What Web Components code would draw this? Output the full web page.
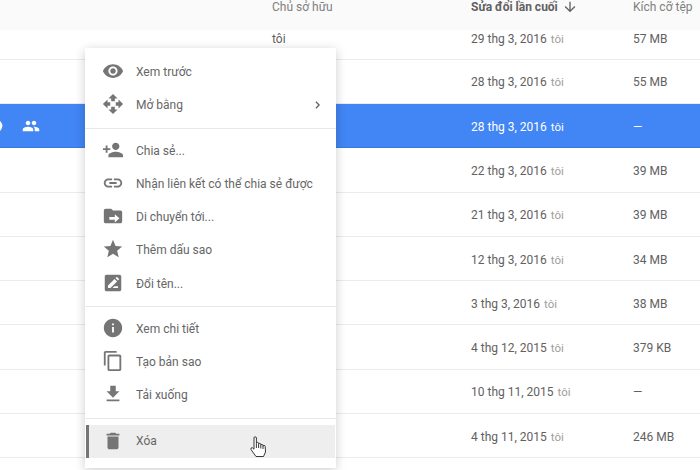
<!DOCTYPE html>
<html lang="vi">
<head>
<meta charset="utf-8">
<title>Drive</title>
<style>
  html, body { margin: 0; height: 100%; overflow: hidden; background: #fff; }
  body { position: relative; font-family: Roboto, "Noto Sans", sans-serif; }
</style>
</head>
<body>

<drive-list>
  <drive-row first owner="tôi" date="29 thg 3, 2016" by="tôi" size="57 MB"></drive-row>
  <drive-row date="28 thg 3, 2016" by="tôi" size="55 MB"></drive-row>
  <drive-row selected date="28 thg 3, 2016" by="tôi" size="—">
    <svg viewBox="0 0 24 24" width="18" height="18" fill="#fff" style="margin-left:-13px;flex:none"><circle cx="12" cy="12" r="7" fill="none" stroke="#fff" stroke-width="3"/></svg>
    <svg viewBox="0 0 24 24" width="18" height="18" fill="#fff" style="margin-left:17px;flex:none"><path d="M16 11c1.66 0 2.99-1.34 2.99-3S17.66 5 16 5c-1.66 0-3 1.34-3 3s1.34 3 3 3zm-8 0c1.66 0 2.99-1.34 2.99-3S9.66 5 8 5C6.34 5 5 6.34 5 8s1.34 3 3 3zm0 2c-2.33 0-7 1.17-7 3.5V19h14v-2.5c0-2.33-4.67-3.5-7-3.5zm8 0c-.29 0-.62.02-.97.05 1.16.84 1.97 1.97 1.97 3.45V19h6v-2.5c0-2.33-4.67-3.5-7-3.5z"/></svg>
  </drive-row>
  <drive-row date="22 thg 3, 2016" by="tôi" size="39 MB"></drive-row>
  <drive-row date="21 thg 3, 2016" by="tôi" size="39 MB"></drive-row>
  <drive-row date="12 thg 3, 2016" by="tôi" size="34 MB"></drive-row>
  <drive-row date="3 thg 3, 2016" by="tôi" size="38 MB"></drive-row>
  <drive-row date="4 thg 12, 2015" by="tôi" size="379 KB"></drive-row>
  <drive-row date="10 thg 11, 2015" by="tôi" size="—"></drive-row>
  <drive-row date="4 thg 11, 2015" by="tôi" size="246 MB"></drive-row>
</drive-list>

<context-menu>
  <menu-group>
    <menu-item icon="M12 4.5C7 4.5 2.73 7.61 1 12c1.73 4.39 6 7.5 11 7.5s9.27-3.11 11-7.5c-1.73-4.39-6-7.5-11-7.5zM12 17c-2.76 0-5-2.24-5-5s2.24-5 5-5 5 2.24 5 5-2.24 5-5 5zm0-8c-1.66 0-3 1.34-3 3s1.34 3 3 3 3-1.34 3-3-1.34-3-3-3z">Xem trước</menu-item>
    <menu-item submenu icon="M10 9h4V6h3l-5-5-5 5h3v3zm-1 1H6V7l-5 5 5 5v-3h3v-4zm14 2l-5-5v3h-3v4h3v3l5-5zm-9 3h-4v3H7l5 5 5-5h-3v-3z">Mở bằng</menu-item>
  </menu-group>
  <menu-group>
    <menu-item icon="M15 12c2.21 0 4-1.79 4-4s-1.79-4-4-4-4 1.79-4 4 1.79 4 4 4zm-9-2V7H4v3H1v2h3v3h2v-3h3v-2H6zm9 4c-2.67 0-8 1.34-8 4v2h16v-2c0-2.66-5.33-4-8-4z">Chia sẻ...</menu-item>
    <menu-item icon="M3.9 12c0-1.71 1.39-3.1 3.1-3.1h4V7H7c-2.76 0-5 2.24-5 5s2.24 5 5 5h4v-1.9H7c-1.71 0-3.1-1.39-3.1-3.1zM8 13h8v-2H8v2zm9-6h-4v1.9h4c1.71 0 3.1 1.39 3.1 3.1s-1.39 3.1-3.1 3.1h-4V17h4c2.76 0 5-2.24 5-5s-2.24-5-5-5z">Nhận liên kết có thể chia sẻ được</menu-item>
    <menu-item icon="M20 6h-8l-2-2H4c-1.1 0-1.99.9-1.99 2L2 18c0 1.1.9 2 2 2h16c1.1 0 2-.9 2-2V8c0-1.1-.9-2-2-2zm-6 13v-3H8v-3h6v-3l5 4.5z">Di chuyển tới...</menu-item>
    <menu-item icon="M12 17.27L18.18 21l-1.64-7.03L22 9.24l-7.19-.61L12 2 9.19 8.63 2 9.24l5.46 4.73L5.82 21z">Thêm dấu sao</menu-item>
    <menu-item icon="M19 3H5c-1.1 0-2 .9-2 2v14c0 1.1.9 2 2 2h14c1.1 0 2-.9 2-2V5c0-1.1-.9-2-2-2zM6.5 17.5v-2.7l7.2-7.2 2.7 2.7-7.2 7.2zm11 0h-6l2-2h4zm-.1-8.2-2.7-2.7 1-1c.3-.3.7-.3 1 0l1.7 1.7c.3.3.3.7 0 1z">Đổi tên...</menu-item>
  </menu-group>
  <menu-group>
    <menu-item icon="M12 2C6.48 2 2 6.48 2 12s4.48 10 10 10 10-4.48 10-10S17.52 2 12 2zm1 15h-2v-6h2v6zm0-8h-2V7h2v2z">Xem chi tiết</menu-item>
    <menu-item icon="M16 1H4c-1.1 0-2 .9-2 2v14h2V3h12V1zm3 4H8c-1.1 0-2 .9-2 2v14c0 1.1.9 2 2 2h11c1.1 0 2-.9 2-2V7c0-1.1-.9-2-2-2zm0 16H8V7h11v14z">Tạo bản sao</menu-item>
    <menu-item icon="M19 9h-4V3H9v6H5l7 7 7-7zM5 18v2h14v-2H5z">Tải xuống</menu-item>
  </menu-group>
  <menu-group last>
    <menu-item active icon="M6 19c0 1.1.9 2 2 2h8c1.1 0 2-.9 2-2V7H6v12zM19 4h-3.5l-1-1h-5l-1 1H5v2h14V4z">Xóa</menu-item>
  </menu-group>
</context-menu>

<script>
class DriveList extends HTMLElement {

    static get template() {

        return `
            <style>
                :host { display: block; }
                header {
                    display: grid;
                    grid-template-columns: 272px 199px 162px 1fr;
                    height: 30px;
                    box-sizing: border-box;
                    padding-top: 1px;
                    background: #fafafa;
                    font: 12px/12px Roboto, sans-serif;
                    color: #808080;
                }
                header > span { white-space: nowrap; }
                .sorted {
                    display: flex;
                    align-items: flex-start;
                    gap: 4px;
                    font-weight: 700;
                    color: #616161;
                }
                .sorted svg { margin-top: -2px; }
            </style>
            <header>
                <span></span>
                <span>Chủ sở hữu</span>
                <span class="sorted">Sửa đổi lần cuối
                    <svg viewBox="0 0 24 24" width="16" height="16" fill="#616161"><path d="M20 12l-1.41-1.41L13 16.17V4h-2v12.17l-5.58-5.59L4 12l8 8z"/></svg>
                </span>
                <span>Kích cỡ tệp</span>
            </header>
            <slot></slot>
        `;
    }

    constructor() {

        super();

        this.theRoot = this.attachShadow({mode: 'open'});
        this.theRoot.innerHTML = DriveList.template;
    }
}

class DriveRow extends HTMLElement {

    static get template() {

        return `
            <style>
                :host {
                    display: grid;
                    grid-template-columns: 272px 199px 162px 1fr;
                    align-items: center;
                    height: 44.3px;
                    padding-top: 2px;
                    box-sizing: border-box;
                    border-bottom: 1px solid #ebebeb;
                    font: 12px/16px Roboto, sans-serif;
                    color: #616161;
                }
                :host([first]) {
                    height: 29.7px;
                    padding-top: 1px;
                    align-items: start;
                }
                :host([selected]) {
                    background: #4285f4;
                    color: #fff;
                    border-bottom-color: #3b78e0;
                }
                .name { display: flex; align-items: center; overflow: hidden; margin-top: -2px; }
                .date { display: flex; gap: 4px; white-space: nowrap; }
                .by { color: #9e9e9e; font-size: 11.5px; }
                :host([selected]) .by { color: #fff; }
            </style>
            <div class="name"><slot></slot></div>
            <div class="owner"></div>
            <div class="date"><span class="when"></span><span class="by"></span></div>
            <div class="size"></div>
        `;
    }

    constructor() {

        super();

        this.theRoot = this.attachShadow({mode: 'open'});
        this.theRoot.innerHTML = DriveRow.template;
    }

    connectedCallback() {

        this.theRoot.querySelector('.owner').textContent = this.getAttribute('owner') || '';
        this.theRoot.querySelector('.when').textContent = this.getAttribute('date');
        this.theRoot.querySelector('.by').textContent = this.getAttribute('by');
        this.theRoot.querySelector('.size').textContent = this.getAttribute('size');
    }
}

class ContextMenu extends HTMLElement {

    static get template() {

        return `
            <style>
                :host {
                    display: block;
                    position: absolute;
                    left: 85px;
                    top: 48px;
                    width: 251px;
                    height: 420px;
                    box-sizing: border-box;
                    padding-top: 6.5px;
                    background: #fff;
                    box-shadow: 0 2px 10px rgba(0, 0, 0, .2);
                }
            </style>
            <slot></slot>
        `;
    }

    constructor() {

        super();

        this.attachShadow({mode: 'open'}).innerHTML = ContextMenu.template;
    }
}

class MenuGroup extends HTMLElement {

    static get template() {

        return `
            <style>
                :host {
                    display: block;
                    padding-bottom: 6.5px;
                    margin-bottom: 4.3px;
                    border-bottom: 1px solid #e8e8e8;
                }
                :host([last]) {
                    border-bottom: 0;
                    padding: 2px 0 0;
                    margin: 0;
                }
            </style>
            <slot></slot>
        `;
    }

    constructor() {

        super();

        this.attachShadow({mode: 'open'}).innerHTML = MenuGroup.template;
    }
}

class MenuItem extends HTMLElement {

    static get template() {

        return `
            <style>
                :host {
                    display: flex;
                    align-items: center;
                    position: relative;
                    height: 33.3px;
                    padding-left: 17px;
                    font: 12px/16px Roboto, sans-serif;
                    color: #666;
                    white-space: nowrap;
                }
                :host([active]) {
                    margin-left: 1px;
                    margin-right: 1px;
                    padding-left: 13px;
                    border-left: 3px solid #757575;
                    background: #eee;
                }
                .icon { width: 22px; height: 22px; margin-right: 12px; fill: #757575; flex: none; }
                .label { padding-top: 2px; }
                :host([active]) .label { padding: 0 0 2px; }
                :host([active]) .icon { margin-bottom: 2px; }
                .arrow { display: none; position: absolute; right: 16px; top: 13px; }
                :host([submenu]) .arrow { display: block; }
                .cursor { display: none; position: absolute; left: 161px; top: 11px; }
                :host([active]) .cursor { display: block; }
            </style>
            <svg class="icon" viewBox="0 0 24 24"><path></path></svg>
            <span class="label"><slot></slot></span>
            <svg class="arrow" viewBox="0 0 6 10" width="5" height="8"><path d="M1 1l4 4-4 4" fill="none" stroke="#616161" stroke-width="1.6"/></svg>
            <svg class="cursor" viewBox="0 0 17 21" width="17" height="21"><path d="M4 2a1.2 1.2 0 0 1 2.4 0V7.5a1.1 1.1 0 0 1 2.2 0V8.5a1.1 1.1 0 0 1 2.2 0V9.5a1.1 1.1 0 0 1 2.2 0V10.5a1.1 1.1 0 0 1 2.2 0L15.5 16 13.5 20.5H6L1 13.5Q.5 11.5 2.3 11.7L4 13.2Z M6.4 8V12 M8.6 8.5V12 M10.8 9.5V12.5 M13 10.5V13" fill="#fff" stroke="#222" stroke-width=".9" stroke-linejoin="round"/></svg>
        `;
    }

    constructor() {

        super();

        this.theRoot = this.attachShadow({mode: 'open'});
        this.theRoot.innerHTML = MenuItem.template;
    }

    connectedCallback() {

        this.theRoot.querySelector('.icon path').setAttribute('d', this.getAttribute('icon'));
    }
}

window.customElements.define('drive-list', DriveList);
window.customElements.define('drive-row', DriveRow);
window.customElements.define('context-menu', ContextMenu);
window.customElements.define('menu-group', MenuGroup);
window.customElements.define('menu-item', MenuItem);
</script>
</body>
</html>
